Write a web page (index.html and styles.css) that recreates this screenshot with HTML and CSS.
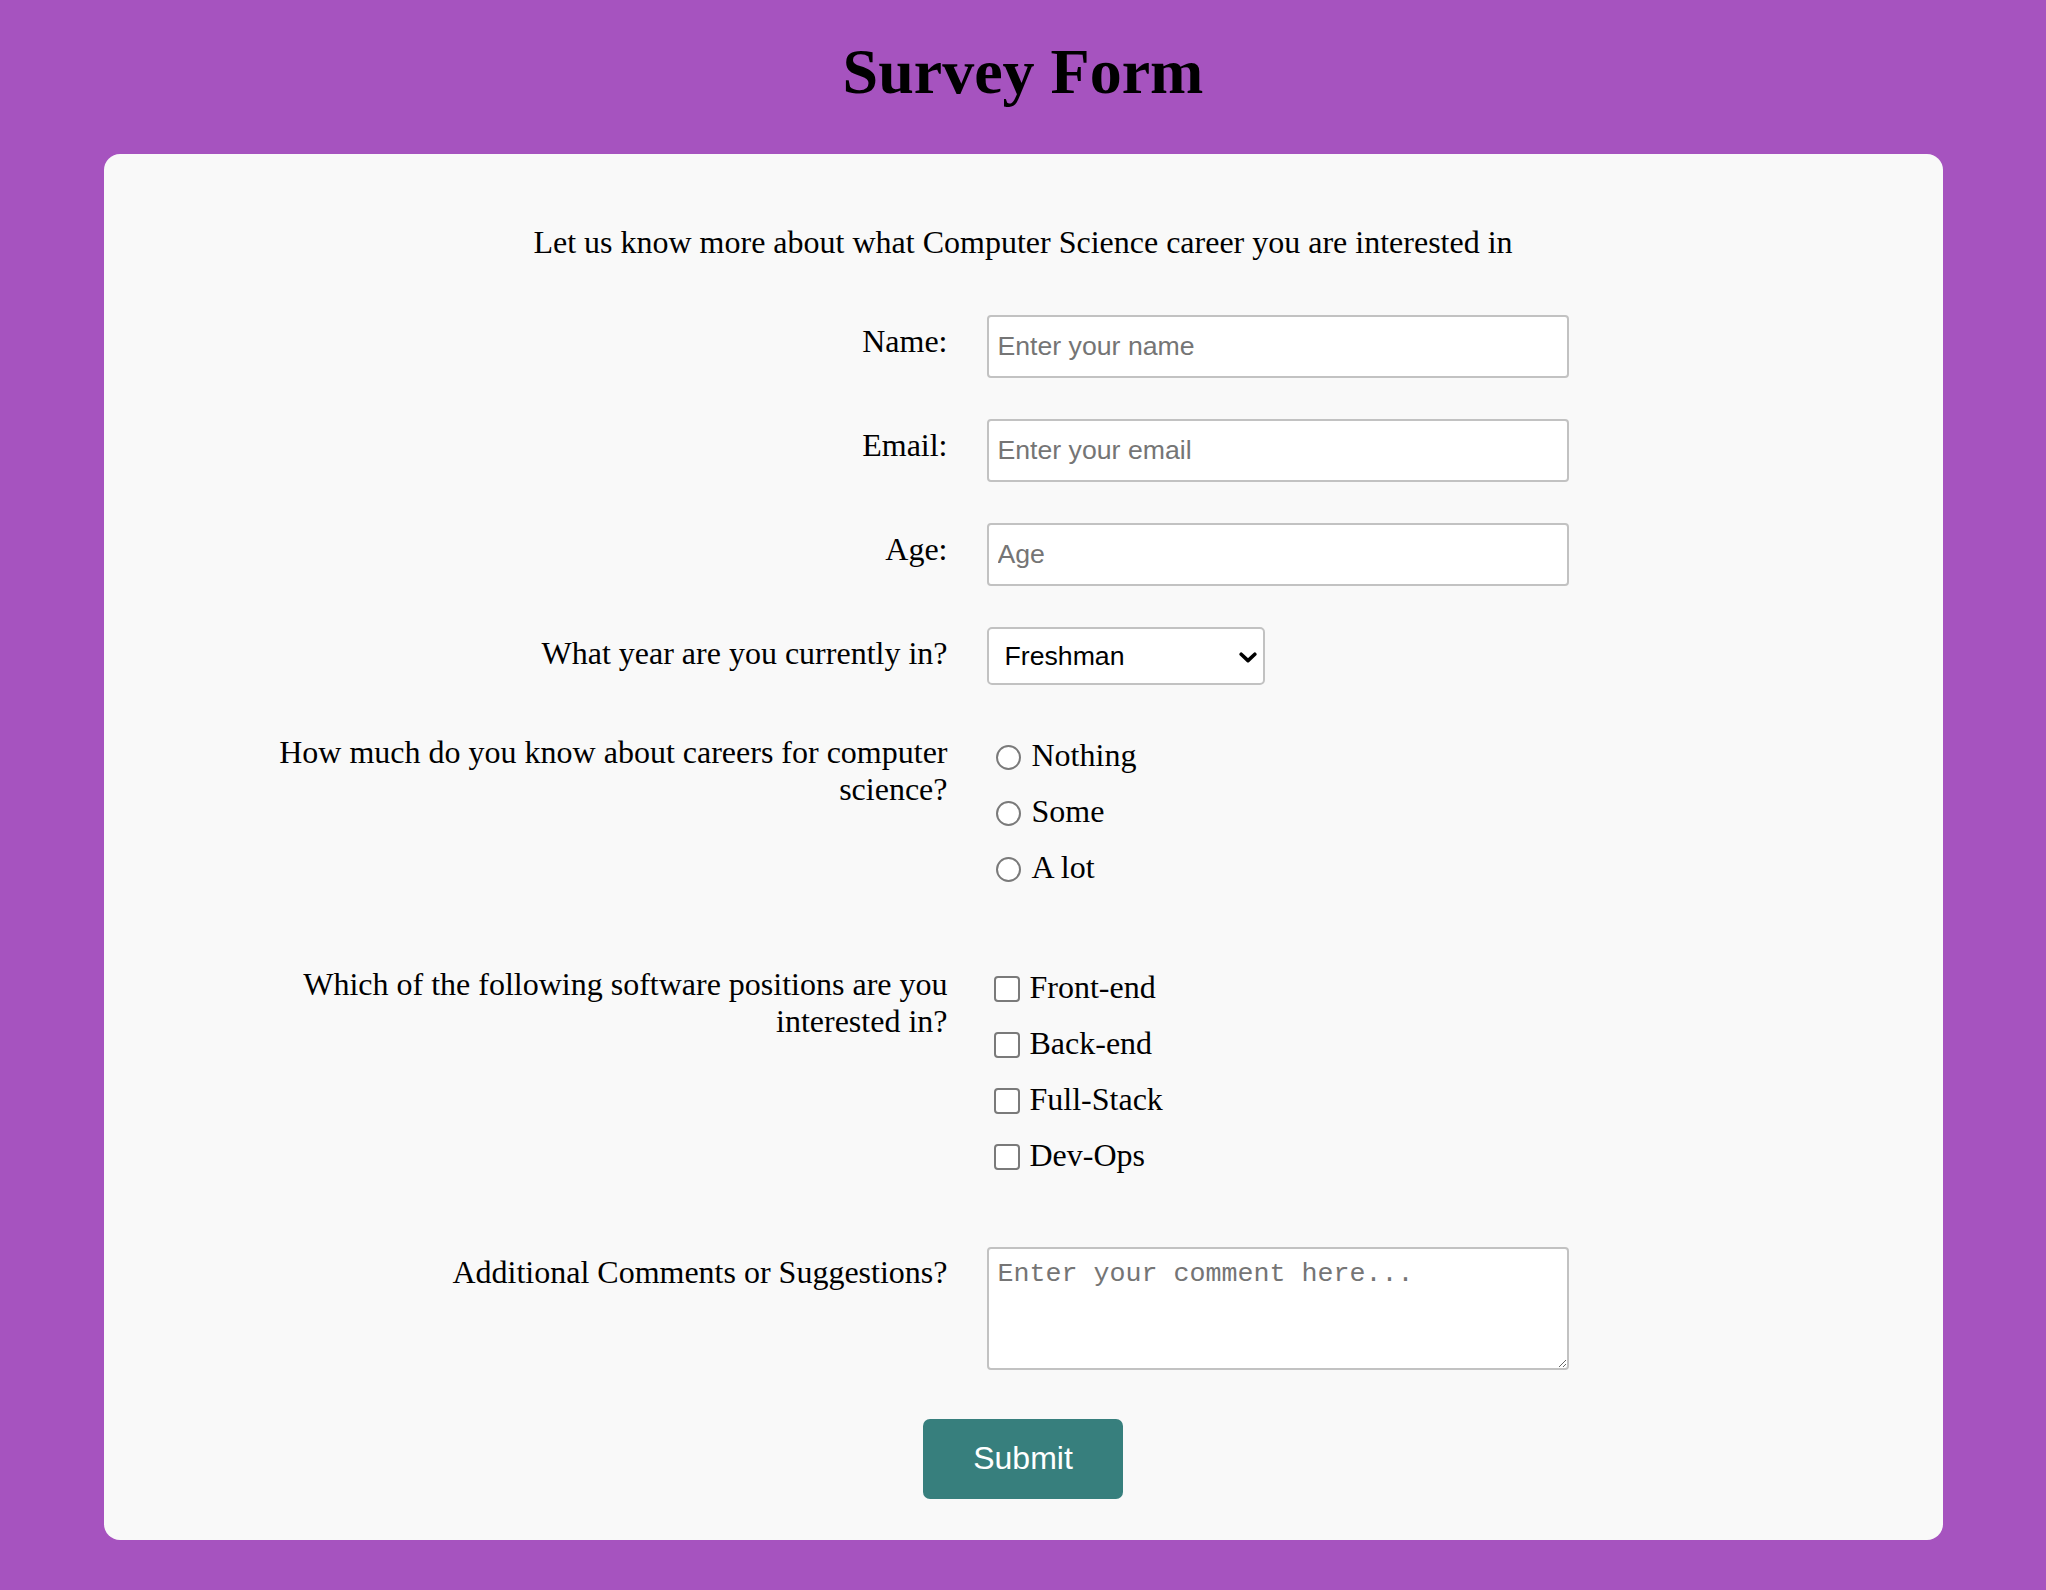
FILE: index.html
```html
<!DOCTYPE html>
<html lang="en">
<head>
<meta charset="utf-8">
<title>Survey Form</title>
<link rel="stylesheet" href="styles.css">
</head>
<body>
<h1 id="title" class="title">Survey Form</h1>
<form id="survey-form" class="card">
  <p id="description" class="description">Let us know more about what Computer Science career you are interested in</p>

  <div class="row">
    <label class="row-label" for="name" id="name-label">Name:</label>
    <div class="row-field"><input id="name" class="text-input" type="text" placeholder="Enter your name"></div>
  </div>

  <div class="row">
    <label class="row-label" for="email" id="email-label">Email:</label>
    <div class="row-field"><input id="email" class="text-input" type="email" placeholder="Enter your email"></div>
  </div>

  <div class="row">
    <label class="row-label" for="number" id="number-label">Age:</label>
    <div class="row-field"><input id="number" class="text-input" type="number" placeholder="Age"></div>
  </div>

  <div class="row">
    <label class="row-label" for="dropdown">What year are you currently in?</label>
    <div class="row-field">
      <div class="select-wrap">
        <select id="dropdown" class="select">
          <option>Freshman</option>
          <option>Sophomore</option>
          <option>Junior</option>
          <option>Senior</option>
        </select>
        <svg class="chevron" width="18" height="11" viewBox="0 0 18 11" aria-hidden="true"><polyline points="2.2,2.2 9,8.6 15.8,2.2" fill="none" stroke="#000" stroke-width="3.6" stroke-linecap="round" stroke-linejoin="round"/></svg>
      </div>
    </div>
  </div>

  <div class="row">
    <div class="row-label">How much do you know about careers for computer science?</div>
    <div class="row-field group">
      <label class="option"><input class="radio" type="radio" name="knowledge" value="nothing">Nothing</label>
      <label class="option"><input class="radio" type="radio" name="knowledge" value="some">Some</label>
      <label class="option"><input class="radio" type="radio" name="knowledge" value="alot">A lot</label>
    </div>
  </div>

  <div class="row">
    <div class="row-label">Which of the following software positions are you interested in?</div>
    <div class="row-field group">
      <label class="option"><input class="check" type="checkbox" value="front-end">Front-end</label>
      <label class="option"><input class="check" type="checkbox" value="back-end">Back-end</label>
      <label class="option"><input class="check" type="checkbox" value="full-stack">Full-Stack</label>
      <label class="option"><input class="check" type="checkbox" value="dev-ops">Dev-Ops</label>
    </div>
  </div>

  <div class="row row-last">
    <label class="row-label row-label-comment" for="comments">Additional Comments or Suggestions?</label>
    <div class="row-field"><textarea id="comments" class="textarea" placeholder="Enter your comment here..."></textarea></div>
  </div>

  <button id="submit" class="submit" type="submit">Submit</button>
</form>
</body>
</html>
```
FILE: styles.css
```css
* {
  box-sizing: border-box;
}

body {
  margin: 0;
  background: #a653bf;
  color: #000;
  font-family: "Liberation Serif", "Times New Roman", serif;
  font-size: 32px;
  line-height: 36.8px;
}

.title {
  margin: 36px 0 46px;
  font-size: 64px;
  line-height: 72px;
  font-weight: 700;
  text-align: center;
}

.card {
  width: 1839px;
  margin: 0 auto;
  padding: 70px 0 41px;
  background: #f9f9f9;
  border-radius: 16px;
}

.description {
  margin: 0 0 54px;
  text-align: center;
}

.row {
  display: grid;
  grid-template-columns: 741px 582px;
  column-gap: 39px;
  padding-left: 103px;
  margin-bottom: 41px;
}

.row-last {
  margin-bottom: 0;
}

.row-label {
  text-align: right;
  padding-top: 8px;
}

.row-label-comment {
  padding-top: 7px;
}

.row-field {
  display: flex;
  flex-direction: column;
  align-items: flex-start;
}

.text-input {
  width: 582px;
  height: 63px;
  margin: 0;
  padding: 0 9px;
  border: 2px solid #c2c2c2;
  border-radius: 4px;
  background: #fff;
  color: #000;
  font-family: "Liberation Sans", Arial, sans-serif;
  font-size: 26.67px;
  outline: none;
}

.text-input::placeholder,
.textarea::placeholder {
  color: #757575;
  opacity: 1;
}

.select-wrap {
  position: relative;
  width: 278px;
  height: 58px;
}

.select {
  appearance: none;
  -webkit-appearance: none;
  width: 278px;
  height: 58px;
  margin: 0;
  padding: 0 16px;
  border: 2px solid #c2c2c2;
  border-radius: 5px;
  background: #fff;
  color: #000;
  font-family: "Liberation Sans", Arial, sans-serif;
  font-size: 26.67px;
}

.chevron {
  position: absolute;
  right: 8px;
  top: 25px;
  pointer-events: none;
}

.group {
  padding: 1px 0 22.5px;
}

.option {
  display: flex;
  align-items: flex-start;
  height: 56px;
  line-height: 56px;
  white-space: nowrap;
}

.radio,
.check {
  appearance: none;
  -webkit-appearance: none;
  flex: none;
  background: #fff;
  border: 2px solid #7a7a7a;
}

.radio {
  width: 25px;
  height: 25px;
  margin: 18px 11px 0 9px;
  border-radius: 50%;
}

.check {
  width: 26px;
  height: 26px;
  margin: 17px 9.5px 0 7.5px;
  border-radius: 4px;
}

.textarea {
  display: block;
  width: 582px;
  height: 123px;
  margin: 0;
  padding: 10px 9px;
  border: 2px solid #c2c2c2;
  border-radius: 4px;
  background: #fff;
  font-family: "Liberation Mono", "Courier New", monospace;
  font-size: 26.67px;
  outline: none;
}

.submit {
  display: block;
  width: 200px;
  height: 80px;
  margin: 49px auto 0;
  padding: 0;
  border: none;
  border-radius: 7px;
  background: #377f7d;
  color: #fff;
  font-family: "Liberation Sans", Arial, sans-serif;
  font-size: 32px;
}
```
